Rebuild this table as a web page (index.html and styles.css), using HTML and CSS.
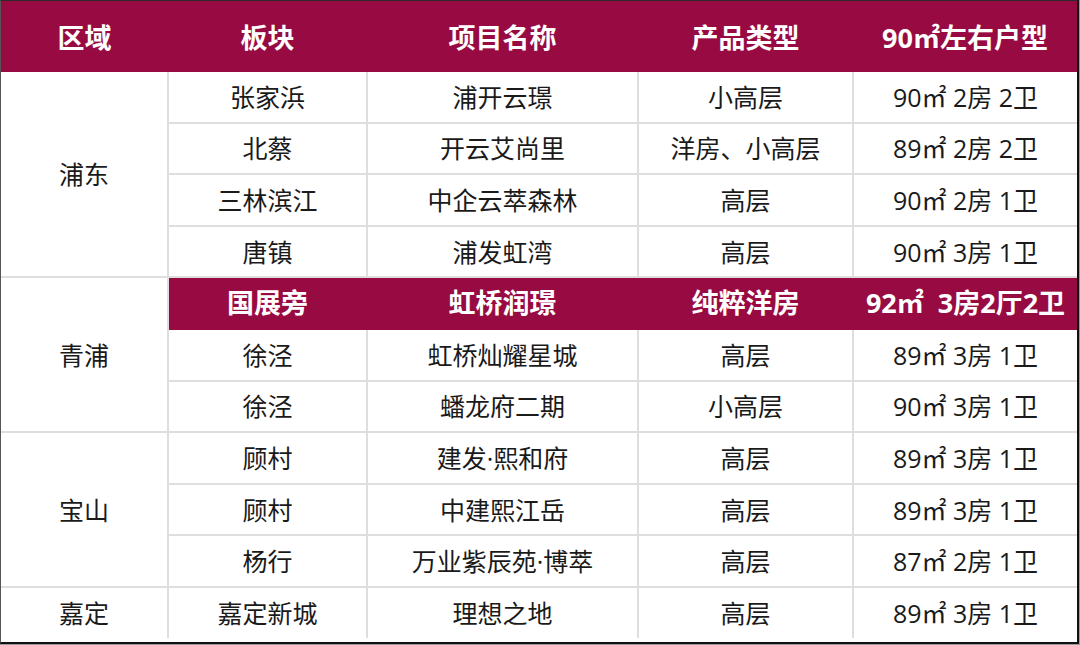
FILE: index.html
```html
<!DOCTYPE html>
<html lang="zh">
<head>
<meta charset="utf-8">
<link rel="stylesheet" href="styles.css">
</head>
<body>
<div class="frame">
<table class="grid">
  <colgroup>
    <col class="c1"><col class="c2"><col class="c3"><col class="c4"><col class="c5">
  </colgroup>
  <thead>
    <tr class="head">
      <th>区域</th><th>板块</th><th>项目名称</th><th>产品类型</th><th>90㎡左右户型</th>
    </tr>
  </thead>
  <tbody>
    <tr><td rowspan="4" class="area">浦东</td><td>张家浜</td><td>浦开云璟</td><td>小高层</td><td>90㎡ 2房 2卫</td></tr>
    <tr><td>北蔡</td><td>开云艾尚里</td><td>洋房、小高层</td><td>89㎡ 2房 2卫</td></tr>
    <tr><td>三林滨江</td><td>中企云萃森林</td><td>高层</td><td>90㎡ 2房 1卫</td></tr>
    <tr><td>唐镇</td><td>浦发虹湾</td><td>高层</td><td>90㎡ 3房 1卫</td></tr>
    <tr class="hl"><td rowspan="3" class="area">青浦</td><td>国展旁</td><td>虹桥润璟</td><td>纯粹洋房</td><td>92㎡&nbsp;&nbsp;3房2厅2卫</td></tr>
    <tr><td>徐泾</td><td>虹桥灿耀星城</td><td>高层</td><td>89㎡ 3房 1卫</td></tr>
    <tr><td>徐泾</td><td>蟠龙府二期</td><td>小高层</td><td>90㎡ 3房 1卫</td></tr>
    <tr><td rowspan="3" class="area">宝山</td><td>顾村</td><td>建发·熙和府</td><td>高层</td><td>89㎡ 3房 1卫</td></tr>
    <tr><td>顾村</td><td>中建熙江岳</td><td>高层</td><td>89㎡ 3房 1卫</td></tr>
    <tr><td>杨行</td><td>万业紫辰苑·博萃</td><td>高层</td><td>87㎡ 2房 1卫</td></tr>
    <tr><td class="area">嘉定</td><td>嘉定新城</td><td>理想之地</td><td>高层</td><td>89㎡ 3房 1卫</td></tr>
  </tbody>
</table>
</div>
</body>
</html>
```

FILE: styles.css
```css
html, body {
  margin: 0;
  padding: 0;
  background: #9a9a9a;
}
body {
  width: 1080px;
  height: 645px;
  overflow: hidden;
  font-family: "Open Sans", "Noto Sans CJK SC", sans-serif;
}
.frame {
  width: 1076px;
  height: 641px;
  background: #fff;
  border-top: 1px solid #2a2a2a;
  border-left: 1px solid #555;
  border-right: 2px solid #111;
  border-bottom: 2px solid #111;
  overflow: hidden;
}
.grid {
  width: 1076px;
  border-collapse: collapse;
  table-layout: fixed;
}
.c1 { width: 167px; }
.c2 { width: 199px; }
.c3 { width: 271px; }
.c4 { width: 215px; }
.c5 { width: 224px; }
.head th {
  height: 71px;
  padding: 0;
  background: #980b42;
  color: #fff;
  font-size: 27px;
  font-weight: 700;
  text-align: center;
  vertical-align: middle;
}
.grid td {
  height: 49.6px;
  padding: 0;
  text-align: center;
  vertical-align: middle;
  font-size: 25px;
  line-height: 30px;
  color: #1a1a1a;
  border: 2px solid #dedede;
}
.grid tr td:last-child { border-right: none; }
.grid td.area { border-left: none; }
.grid tbody tr:first-child td { border-top: none; }
.grid tbody tr:last-child td { border-bottom: none; }
.hl td {
  background: #980b42;
  color: #fff;
  font-weight: 700;
  font-size: 27px;
  border-color: #980b42;
}
.hl td.area {
  background: #fff;
  color: #1a1a1a;
  font-weight: 400;
  font-size: 25px;
  border-color: #dedede;
  border-left: none;
}
```
